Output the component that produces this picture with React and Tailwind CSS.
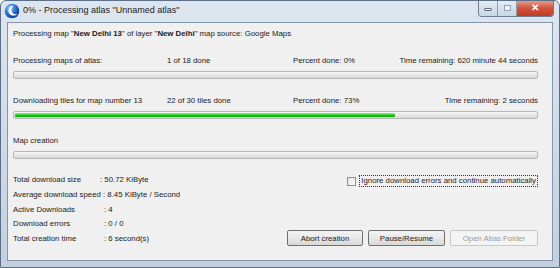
const font = { fontFamily: '"Liberation Sans", Arial, sans-serif' }

function Bar({ value = 0 }) {
  return (
    <div className="h-[8px] w-full rounded-[2px] border border-[#b6b6b6] bg-gradient-to-b from-[#f6f6f6] via-[#e8e8e8] to-[#d9d9d9] p-px">
      <div
        className="h-full rounded-[1px] bg-gradient-to-b from-[#8ff08f] via-[#12cc12] to-[#0aa40a]"
        style={{ width: `${value}%` }}
      />
    </div>
  )
}

function ProgressRow({ label, done, percent, remaining, value }) {
  return (
    <div>
      <div className="flex h-[11px] items-center">
        <span className="w-[154px]">{label}</span>
        <span className="w-[126px]">{done}</span>
        <span>Percent done: {percent}</span>
        <span className="ml-auto">Time remaining: {remaining}</span>
      </div>
      <div className="mt-[5px]">
        <Bar value={value} />
      </div>
    </div>
  )
}

function Button({ children, disabled }) {
  return (
    <div
      className={
        disabled
          ? 'flex h-[16px] items-center justify-center rounded-[2px] border border-[#c4c8cb] bg-[#f4f4f4] text-[#9a9a9a]'
          : 'flex h-[16px] items-center justify-center rounded-[2px] border border-[#707070] bg-gradient-to-b from-[#f4f4f4] via-[#e8e8e8] to-[#d8d8d8] text-[#1a1a1a]'
      }
    >
      {children}
    </div>
  )
}

const stats = [
  ['Total download size', ': 50.72 KiByte', 'w-[87px]'],
  ['Average download speed', ' : 8.45 KiByte / Second', ''],
  ['Active Downloads', ': 4', 'w-[91px]'],
  ['Download errors', ': 0 / 0', 'w-[91px]'],
  ['Total creation time', ': 6 second(s)', 'w-[91px]'],
]

export default function App() {
  return (
    <div
      className="relative flex h-[268px] w-[560px] flex-col overflow-hidden rounded-t-[6px] border border-[#5d6f86] bg-gradient-to-b from-[#dde6f0] via-[#cfdbe8] to-[#c2d0df]"
      style={font}
    >
      {/* title bar */}
      <div className="flex h-[20px] items-center pl-[3px]">
        <svg width="16" height="16" viewBox="0 0 16 16" className="mr-[3px]">
          <defs>
            <radialGradient id="g" cx="0.35" cy="0.3" r="0.8">
              <stop offset="0" stopColor="#8fc3ff" />
              <stop offset="0.6" stopColor="#1d63c9" />
              <stop offset="1" stopColor="#0b2f78" />
            </radialGradient>
          </defs>
          <circle cx="8" cy="8" r="7.3" fill="url(#g)" />
          <path d="M9.5 2.5 C5 3 3.5 7 5 10 C6.5 13 11 13.5 13.5 11 C10.5 12 7.5 10.5 7.5 7.5 C7.5 5.3 8.5 3.5 9.5 2.5 Z" fill="#ffffff" />
        </svg>
        <span className="text-[9px] text-[#1b1b1b]">0% - Processing atlas "Unnamed atlas"</span>
      </div>

      {/* caption buttons */}
      <div className="absolute right-[5px] top-[-1px] flex h-[17px] overflow-hidden rounded-b-[4px] border border-[#6c7d93] border-t-0">
        <div className="flex w-[19px] items-center justify-center border-r border-[#8d9cb0] bg-gradient-to-b from-[#e6edf5] to-[#c9d6e4]">
          <div className="mt-[3px] h-[3px] w-[8px] rounded-[1px] border border-[#5c6b7e] bg-white" />
        </div>
        <div className="flex w-[19px] items-center justify-center border-r border-[#8d9cb0] bg-gradient-to-b from-[#e6edf5] to-[#c9d6e4]">
          <div className="h-[6px] w-[7px] border border-[#93a1b3] bg-[#eef2f7]" />
        </div>
        <div className="flex w-[36px] items-center justify-center bg-gradient-to-b from-[#e8a493] via-[#d0543e] to-[#c23b23]">
          <span className="text-[10px] font-bold leading-none text-white">✕</span>
        </div>
      </div>

      {/* client area */}
      <div className="mx-[6px] mb-[6px] mt-[1px] flex flex-1 flex-col border border-[#8596ab] bg-[#f0f0f0] pl-[5px] pr-[14px] pt-[5px] text-[7.8px] leading-[11px] text-[#1a1a1a]">
        <div className="h-[11px]">
          Processing map "<b>New Delhi 13</b>" of layer "<b>New Delhi</b>" map source: Google Maps
        </div>

        <div className="mt-[16px]">
          <ProgressRow label="Processing maps of atlas:" done="1 of 18 done" percent="0%" remaining="620 minute 44 seconds" value={0} />
        </div>

        <div className="mt-[16px]">
          <ProgressRow label="Downloading tiles for map number 13" done="22 of 30 tiles done" percent="73%" remaining="2 seconds" value={73} />
        </div>

        <div className="mt-[16px]">
          <div className="h-[11px]">Map creation</div>
          <div className="mt-[5px]">
            <Bar value={0} />
          </div>
        </div>

        <div className="mt-[13.5px] flex flex-1 pb-[14px]">
          <div className="flex flex-col">
            {stats.map(([k, v, w]) => (
              <div key={k} className="flex h-[14.8px] items-center whitespace-pre">
                <span className={w}>{k}</span>
                <span>{v}</span>
              </div>
            ))}
          </div>

          <div className="ml-auto flex flex-col items-end justify-between">
            <div className="flex items-center pt-[3px]">
              <div className="mr-[3px] h-[9px] w-[9px] border border-[#8e8f8f] bg-gradient-to-br from-[#e4e4e4] to-[#fafafa]" />
              <span className="border border-dotted border-[#333] px-[1px] leading-[10px]">Ignore download errors and continue automatically</span>
            </div>
            <div className="flex gap-[5px]">
              <div className="w-[76px]"><Button>Abort creation</Button></div>
              <div className="w-[77px]"><Button>Pause/Resume</Button></div>
              <div className="w-[88px]"><Button disabled>Open Atlas Folder</Button></div>
            </div>
          </div>
        </div>
      </div>
    </div>
  )
}
